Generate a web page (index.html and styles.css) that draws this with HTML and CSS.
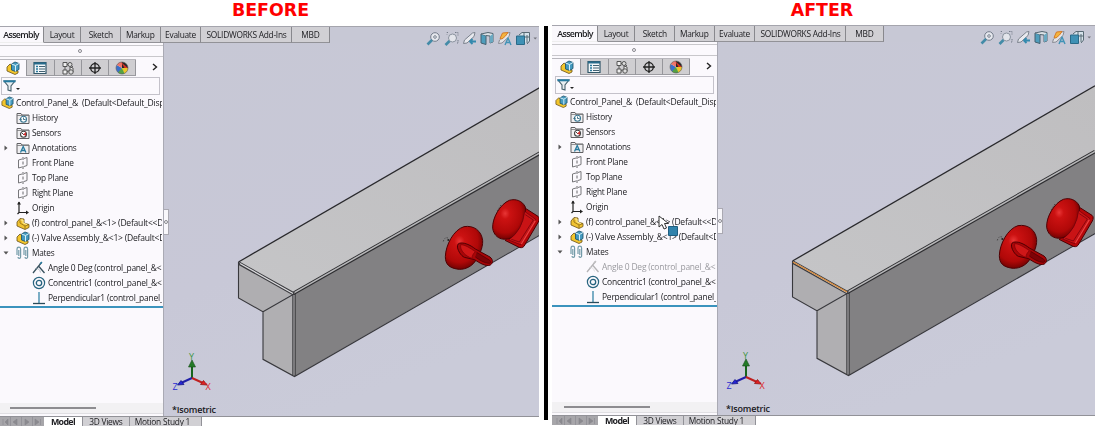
FILE: index.html
```html
<!DOCTYPE html>
<html lang="en">
<head>
<meta charset="utf-8">
<title>Assembly mates: before and after</title>
<link rel="stylesheet" href="styles.css">
</head>
<body>
<svg class="defs" aria-hidden="true">
  <defs>
    <radialGradient id="red" cx=".38" cy=".35" r=".7"><stop offset="0" stop-color="#e83636"/><stop offset=".2" stop-color="#cc1212"/><stop offset=".7" stop-color="#b00808"/><stop offset="1" stop-color="#600000"/></radialGradient>
    <linearGradient id="top" x1="0" y1="1" x2="1" y2="0"><stop offset="0" stop-color="#c5c5c7"/><stop offset="1" stop-color="#bfbec0"/></linearGradient>
    <linearGradient id="bg" x1="0" y1="0" x2=".4" y2="1"><stop offset="0" stop-color="#c7c8d5"/><stop offset=".6" stop-color="#c8c8d7"/><stop offset="1" stop-color="#cacbd9"/></linearGradient>
  </defs>
  <symbol id="asm" viewBox="0 0 14 14"><path d="M1 6l3-3 3 2v4l5 1v2l-3 1.500L1 10z" fill="#f3c52b" stroke="#66501a" stroke-width=".8"/><path d="M5.500 3L9 1l4 1.500v6L9.500 10.500 5.500 9z" fill="#459abf" stroke="#174b65" stroke-width=".8"/><path d="M5.500 3l4 1.500L13 2.500M9.500 4.500v6" fill="none" stroke="#d8f1fa" stroke-width="1"/></symbol>
  <symbol id="part" viewBox="0 0 14 14"><path d="M1 6l3-3.500L8 3v4l5 1.500v3L9 13.500 1 10z" fill="#f0c231" stroke="#6b5218" stroke-width=".8"/><path d="M4 3v4l5 3v3M9 10l4-1.500" fill="none" stroke="#8c6b18" stroke-width=".8"/><path d="M4.500 4L7 4v3l4 1.500" fill="none" stroke="#fff0a0"/></symbol>
  <symbol id="list" viewBox="0 0 14 14"><path d="M1 1.500h12v11H1z" fill="#f3f8fa" stroke="#315668" stroke-width="1.200"/><path d="M1 2.500h12" stroke="#286c8c" stroke-width="2"/><path d="M3 5.500h2M3 8h2M3 10.500h2" stroke="#287a9e" stroke-width="1.500"/><path d="M6 5.500h6M6 8h6M6 10.500h6" stroke="#426273"/></symbol>
  <symbol id="config" viewBox="0 0 14 14"><g fill="#eee" stroke="#555" stroke-width="1"><path d="M2 1.500h4v4H2zM2 9h4v4H2zM9 6l3 1v4l-3-1z"/><path d="M4 5.500V9M6 3.500h3L12 6M6 11l3-2" fill="none"/></g><circle cx="9" cy="3.500" r="2" fill="#ddd" stroke="#555"/><circle cx="10" cy="11" r="2.200" fill="#ddd" stroke="#555"/></symbol>
  <symbol id="target" viewBox="0 0 14 14"><circle cx="7" cy="7" r="4.300" fill="none" stroke="#222" stroke-width="1.300"/><path d="M7 1v12M1 7h12" stroke="#222" stroke-width="1.300"/></symbol>
  <symbol id="ball" viewBox="0 0 14 14"><circle cx="7" cy="7" r="6" fill="#eee"/><path d="M7 7L1.800 4A6 6 0 0 0 4 12z" fill="#3a70c9"/><path d="M7 7L1.800 4A6 6 0 0 1 7 1z" fill="#ef7569"/><path d="M7 7V1a6 6 0 0 1 6 6z" fill="#282828"/><path d="M6 1l7 6-3 1z" fill="#d33125"/><path d="M7 7h6a6 6 0 0 1-4 5.500z" fill="#edc629"/><path d="M7 7l2.500 5.500A6 6 0 0 1 3 11.500z" fill="#55a243"/><circle cx="7" cy="7" r="6" fill="none" stroke="#555" stroke-width=".6"/></symbol>
  <symbol id="funnel" viewBox="0 0 18 14"><path d="M1 2h11L8 7v5l-3-1V7z" fill="#e8eef1" stroke="#47616d" stroke-width="1.100"/><path d="M.500 2.300h12" stroke="#247aa0" stroke-width="2"/><path d="M13 9h4l-2 2z" fill="#222"/></symbol>
  <symbol id="folder" viewBox="0 0 14 14"><path d="M1 12.500v-10h4l1 1.500h7v8.500z" fill="#f0eff1" stroke="#606063"/><path d="M1 4.500h12" stroke="#77777a" stroke-width=".8"/></symbol>
  <symbol id="history" viewBox="0 0 14 14"><use href="#folder"/><circle cx="7.500" cy="8.300" r="3" fill="#fff" stroke="#3c7893" stroke-width="1.100"/><path d="M7.500 6.500v2h2M3.500 9l1-1.500 1 1.500" fill="none" stroke="#356b82" stroke-width=".9"/></symbol>
  <symbol id="sensor" viewBox="0 0 14 14"><use href="#folder"/><circle cx="7.500" cy="8.300" r="3" fill="#fff" stroke="#444" stroke-width="1.100"/><path d="M5.500 6.500L8 9" stroke="#444"/><path d="M7 8.500l3-2.500v4z" fill="#cf3030"/></symbol>
  <symbol id="annot" viewBox="0 0 14 14"><use href="#folder"/><path d="M4.500 11.500l2.700-6 2.700 6M5.500 9.500h3.500" fill="none" stroke="#26799d" stroke-width="1.300"/></symbol>
  <symbol id="plane" viewBox="0 0 14 14"><path d="M6 3L2.500 4v8L6 11M8 2.500l3-1v8L8 10.500" fill="none" stroke="#77777a" stroke-width="1"/><path d="M7 1v12" stroke="#68686c" stroke-dasharray="3 1.500"/></symbol>
  <symbol id="origin" viewBox="0 0 14 14"><path d="M3 1v10.500h9M1.500 13L3 11.500" fill="none" stroke="#222" stroke-width="1.200"/><path d="M1 3.500L3 .500l2 3zM10 9.500l3 2-3 2z" fill="#222"/></symbol>
  <symbol id="mates" viewBox="0 0 14 14"><g fill="none" stroke="#739aa8" stroke-width="1.200"><path d="M2.800 4v6M1 9V3a1.800 1.800 0 0 1 3.600 0v8a1.300 1.300 0 0 1-2.600 0M9.800 4v6M8 9V3a1.800 1.800 0 0 1 3.600 0v8a1.300 1.300 0 0 1-2.600 0"/></g></symbol>
  <symbol id="angle" viewBox="0 0 14 14"><path d="M1 12L9.500 1.500M6.500 5L12.500 12" fill="none" stroke="#38515e" stroke-width="1.300"/><path d="M3 7.500c3-.5 5 1 5.500 4" fill="none" stroke="#80949e" stroke-width=".6"/><path d="M8 3l2-2" stroke="#267b9f" stroke-width="1.500"/></symbol>
  <symbol id="conc" viewBox="0 0 14 14"><circle cx="7" cy="7" r="5.600" fill="none" stroke="#27647f" stroke-width="1.200"/><circle cx="7" cy="7" r="2.700" fill="none" stroke="#27647f" stroke-width="1.300"/></symbol>
  <symbol id="perp" viewBox="0 0 14 14"><path d="M7 1v11.500" stroke="#3585a8" stroke-width="1.300"/><path d="M1 12.500h12" stroke="#294b5b" stroke-width="1.300"/></symbol>
  <symbol id="arrow" viewBox="0 0 6 8"><path d="M1.500 1.500L4.500 4l-3 2.500z" fill="#555"/></symbol>
  <symbol id="open" viewBox="0 0 6 8"><path d="M.500 2.500h5L3 5.500z" fill="#555"/></symbol>

  <symbol id="views" viewBox="0 0 112 16">
    <g fill="none" stroke-linejoin="round">
      <circle cx="9" cy="6" r="4.300" fill="#e6e8ee" stroke="#747d8b"/><path d="M7 6h4M9 4v4" stroke="#5f6a78" stroke-dasharray="1.500 1"/><path d="M1.500 13.500L6 9" stroke="#438ba7" stroke-width="2.600"/>
      <circle cx="26.500" cy="7" r="4" fill="#e3e5eb" stroke="#8a929e"/><path d="M22 1.500h-1v2M29 1.500h3v3M32 9v3h-2" stroke="#737b88" stroke-dasharray="1.500 1"/><path d="M19.500 14l4-4" stroke="#438ba7" stroke-width="2.600"/>
      <path d="M37.500 12.500l1-3.500 8-7 2.500-.5-1 4-7 6.500z" fill="#e8e9ee" stroke="#7b828d"/><path d="M50 10.500h-6m2.500-2.500L44 10.500l2.500 2.500" stroke="#348aae" stroke-width="1.800"/>
      <path d="M55 3l5 1.500v9L55 12z" fill="#4f9dbc" stroke="#456170"/><path d="M55 3l7-1.500 5 1v8.500l-3 1V5l-4-.5" fill="#dbe1e6" stroke="#536570"/><path d="M64 5v7l3-1V3z" fill="#6aa9c2"/>
      <path d="M72.500 12.500l1-3.500 8-7 2.500-.5-1 4-7 6.500z" fill="#e3e4e7" stroke="#898c94"/><path d="M74 7.500L76.500 2 82 1.500 79.500 5 76 8z" fill="#f4b43d" stroke="#d67a28"/><path d="M79 14l3-7 3 7m-5-2.500h4" stroke="#4293b6" stroke-width="1.400"/>
      <path d="M93 4l3-2.500h7.500V10L101 13" fill="#d6e3eb" stroke="#596a74"/><path d="M98 2v11M93 6h10M101 4v8" stroke="#596a74"/><path d="M90.500 5h8v8.500h-8z" fill="#3f91b5" stroke="#2a6a88"/>
    </g>
    <path d="M107.500 6.500h3.500l-1.800 2z" fill="#73747d"/>
  </symbol>

  <symbol id="scene" viewBox="164 43 377 373">
    <path d="M164 43h377v373H164z" fill="url(#bg)"/>
    <path d="M239 262L541 87v66L294 293z" fill="url(#top)"/>
    <path d="M294 293L541 152v82L294 376.500z" fill="#828183"/>
    <path d="M238.500 262.500v35.500L263 311.800l30.500-18.500z" fill="#afaeb1"/>
    <path d="M263 311.800v47.500l31 17V293.500z" fill="#b0afb2"/>
    <path d="M238.500 262L541 86.800" fill="none" stroke="#29292c" stroke-width="1.300"/>
    <path d="M238.500 262v36L263 311.800v47.500l31.500 17.200L541 234.500M263 311.800l30.500-17.500" fill="none" stroke="#38383c" stroke-width="1.100"/>
    <path d="M294 293L541 152.500" stroke="#2d2d30" stroke-width="3.600"/>
    <path d="M294 292.800L541 152.300" stroke="#b8b8ba" stroke-width="1.500"/>
    <path d="M239 263.200L294 294" stroke="#3b3b3f" stroke-width="3.400"/>
    <path d="M240 263.500L293 293.500" stroke="#dadadd" stroke-width="1.300"/>
    <path d="M294 294v82" stroke="#38383b" stroke-width="3.400"/><path d="M294 295v80.500" stroke="#929194" stroke-width="1.500"/>
    <g transform="translate(420 180) scale(.33333)" stroke="#4c0003" stroke-width="3">
      <path d="M70 184q4-15 16-9M232 92l10-16" fill="none" stroke="#333" stroke-dasharray="3 5"/><circle cx="85" cy="180" r="3" fill="#222" stroke="none"/>
      <path d="M76 230C77 195 101 149 132 140c29-5 53 12 56 42 1 22-11 47-24 64-12 16-34 25-54 21-21-4-34-13-34-37z" fill="url(#red)"/>
      <path d="M118 190c12-4 32 4 48 17l44 24c10 8 9 19 1 24-12 6-33-6-47-16l-31-7c-15-7-29-38-15-42z" fill="#a80608"/>
      <path d="M122 194c13 0 28 10 44 21-6 5-10 13-10 20-18-6-37-23-34-41z" fill="#cf1718" stroke="#780006" stroke-width="2"/>
      <path d="M170 217l38 23c6 5 5 11-2 10-14-1-29-11-40-19" fill="#7d0307" stroke-width="2"/>
      <path d="M300 78l18 8 36 23c5 4 4 11 1 17l-43 73c-4 5-11 5-17 2l-40-20" fill="#b50709"/>
      <path d="M218 145c-2-31 23-73 50-84 19-6 40 2 48 20 5 26-13 70-37 89-19 14-55 11-61-25z" fill="url(#red)"/>
      <path d="M314 94l33 24-45 76-36-14q42-30 48-86z" fill="#c91315" stroke="#66000a" stroke-width="2"/>
      <path d="M316 104l24 16-42 66-24-8" fill="none" stroke="#66000a" stroke-width="2"/>
      <path d="M346 122l-42 70" stroke="#ed4040" stroke-width="4" fill="none"/>
    </g>
    <g fill="none" stroke-width="2"><path d="M192 378v-13" stroke="#17651c"/><path d="M192 378l-11 5" stroke="#2020a8"/><path d="M192 378l11 5" stroke="#c02020"/></g>
    <path d="M192 360l3.500 7h-7z" fill="#247b28" stroke="#164b18" stroke-width=".6"/><path d="M177.500 385l3.500-4.500 3 4z" fill="#2525d3" stroke="#171785" stroke-width=".8"/><path d="M207 385l-3.500-4.500-3 4z" fill="#e32020" stroke="#8e1515" stroke-width=".8"/>
  </symbol>
</svg>

<main class="comparison">
  <section class="side before">
    <h2 class="heading">BEFORE</h2>
    <div class="window">
      <nav class="ribbon"><b><em>Assembly</em></b><span class="w37"><em>Layout</em></span><span class="w40"><em>Sketch</em></span><span class="w40"><em>Markup</em></span><span class="w40"><em>Evaluate</em></span><span class="w91"><em>SOLIDWORKS Add-Ins</em></span><span class="w38"><em>MBD</em></span></nav>
      <svg class="views"><use href="#views"/></svg>
      <div class="work">
        <aside class="panel">
          <div class="grip"><i></i></div>
          <div class="ptabs"><span class="on"><svg><use href="#asm"/></svg></span><span><svg><use href="#list"/></svg></span><span><svg><use href="#config"/></svg></span><span><svg><use href="#target"/></svg></span><span><svg><use href="#ball"/></svg></span><svg class="more" viewBox="0 0 6 8"><path d="M1 1l3.500 3L1 7"/></svg></div>
          <div class="filter"><svg><use href="#funnel"/></svg></div>
          <div class="tree">
            <div class="row root"><svg class="ic"><use href="#asm"/></svg><span>Control_Panel_&amp;&nbsp; (Default&lt;Default_Displ</span></div>
            <div class="row"><i class="tw"></i><svg class="ic"><use href="#history"/></svg><span>History</span></div>
            <div class="row"><i class="tw"></i><svg class="ic"><use href="#sensor"/></svg><span>Sensors</span></div>
            <div class="row"><svg class="tw"><use href="#arrow"/></svg><svg class="ic"><use href="#annot"/></svg><span>Annotations</span></div>
            <div class="row"><i class="tw"></i><svg class="ic"><use href="#plane"/></svg><span>Front Plane</span></div>
            <div class="row"><i class="tw"></i><svg class="ic"><use href="#plane"/></svg><span>Top Plane</span></div>
            <div class="row"><i class="tw"></i><svg class="ic"><use href="#plane"/></svg><span>Right Plane</span></div>
            <div class="row"><i class="tw"></i><svg class="ic"><use href="#origin"/></svg><span>Origin</span></div>
            <div class="row comp"><svg class="tw"><use href="#arrow"/></svg><svg class="ic"><use href="#part"/></svg><span>(f) control_panel_&amp;&lt;1&gt; (Default&lt;&lt;D</span></div>
            <div class="row comp"><svg class="tw"><use href="#arrow"/></svg><svg class="ic"><use href="#asm"/></svg><span>(-) Valve Assembly_&amp;&lt;1&gt; (Default&lt;D</span></div>
            <div class="row"><svg class="tw"><use href="#open"/></svg><svg class="ic"><use href="#mates"/></svg><span>Mates</span></div>
            <div class="row child"><svg class="ic"><use href="#angle"/></svg><span>Angle 0 Deg (control_panel_&amp;&lt;</span></div>
            <div class="row child"><svg class="ic"><use href="#conc"/></svg><span>Concentric1 (control_panel_&amp;&lt;</span></div>
            <div class="row child"><svg class="ic"><use href="#perp"/></svg><span>Perpendicular1 (control_panel_&amp;</span></div>
          </div>
          <div class="scroll"><i></i></div>
        </aside>
        <div class="viewport">
          <svg class="model" viewBox="164 43 377 373"><use href="#scene" x="164" y="43" width="377" height="373"/><g class="axis"><text x="189" y="359.500" fill="#409544">Y</text><text x="172.500" y="389.500" fill="#2b2bd0">Z</text><text x="205.500" y="390" fill="#df2828">X</text></g><text x="172" y="413" class="orientation" textLength="44">*Isometric</text></svg>
          <div class="handle"><i></i></div>
        </div>
      </div>
      <footer class="sheets"><span class="nav"><svg viewBox="0 0 44 10"><path d="M3 2v6M8 2L5 5l3 3zM17 2l-4 3 4 3zM25 2l4 3-4 3zM35 2l4 3-4 3zM40.500 2v6M10.500 0v10M21.500 0v10M32.500 0v10"/></svg></span><b><em>Model</em></b><span class="w47"><em>3D Views</em></span><span class="w73"><em>Motion Study 1</em></span></footer>
    </div>
  </section>

  <div class="divider"></div>

  <section class="side after">
    <h2 class="heading">AFTER</h2>
    <div class="window">
      <nav class="ribbon"><b><em>Assembly</em></b><span class="w37"><em>Layout</em></span><span class="w40"><em>Sketch</em></span><span class="w40"><em>Markup</em></span><span class="w40"><em>Evaluate</em></span><span class="w91"><em>SOLIDWORKS Add-Ins</em></span><span class="w38"><em>MBD</em></span></nav>
      <svg class="views"><use href="#views"/></svg>
      <div class="work">
        <aside class="panel">
          <div class="grip"><i></i></div>
          <div class="ptabs"><span class="on"><svg><use href="#asm"/></svg></span><span><svg><use href="#list"/></svg></span><span><svg><use href="#config"/></svg></span><span><svg><use href="#target"/></svg></span><span><svg><use href="#ball"/></svg></span><svg class="more" viewBox="0 0 6 8"><path d="M1 1l3.500 3L1 7"/></svg></div>
          <div class="filter"><svg><use href="#funnel"/></svg></div>
          <div class="tree">
            <div class="row root"><svg class="ic"><use href="#asm"/></svg><span>Control_Panel_&amp;&nbsp; (Default&lt;Default_Displ</span></div>
            <div class="row"><i class="tw"></i><svg class="ic"><use href="#history"/></svg><span>History</span></div>
            <div class="row"><i class="tw"></i><svg class="ic"><use href="#sensor"/></svg><span>Sensors</span></div>
            <div class="row"><svg class="tw"><use href="#arrow"/></svg><svg class="ic"><use href="#annot"/></svg><span>Annotations</span></div>
            <div class="row"><i class="tw"></i><svg class="ic"><use href="#plane"/></svg><span>Front Plane</span></div>
            <div class="row"><i class="tw"></i><svg class="ic"><use href="#plane"/></svg><span>Top Plane</span></div>
            <div class="row"><i class="tw"></i><svg class="ic"><use href="#plane"/></svg><span>Right Plane</span></div>
            <div class="row"><i class="tw"></i><svg class="ic"><use href="#origin"/></svg><span>Origin</span></div>
            <div class="row comp"><svg class="tw"><use href="#arrow"/></svg><svg class="ic"><use href="#part"/></svg><span>(f) control_panel_&amp;&lt;1&gt; (Default&lt;&lt;D</span></div>
            <div class="row comp"><svg class="tw"><use href="#arrow"/></svg><svg class="ic"><use href="#asm"/></svg><span>(-) Valve Assembly_&amp;&lt;1&gt; (Default&lt;D</span></div>
            <div class="row"><svg class="tw"><use href="#open"/></svg><svg class="ic"><use href="#mates"/></svg><span>Mates</span></div>
            <div class="row child suppressed"><svg class="ic"><use href="#angle"/></svg><span>Angle 0 Deg (control_panel_&amp;&lt;</span></div>
            <div class="row child"><svg class="ic"><use href="#conc"/></svg><span>Concentric1 (control_panel_&amp;&lt;</span></div>
            <div class="row child"><svg class="ic"><use href="#perp"/></svg><span>Perpendicular1 (control_panel_&amp;</span></div>
          </div>
          <div class="scroll"><i></i></div>
        </aside>
        <div class="viewport">
          <svg class="model" viewBox="164 43 377 373"><use href="#scene" x="164" y="43" width="377" height="373"/><path d="M239 263L293 293" stroke="#d88938" stroke-width="1.400"/><g class="axis"><text x="189" y="359.500" fill="#409544">Y</text><text x="172.500" y="389.500" fill="#2b2bd0">Z</text><text x="205.500" y="390" fill="#df2828">X</text></g><text x="172" y="413" class="orientation" textLength="44">*Isometric</text></svg>
          <div class="handle"><i></i></div>
        </div>
      </div>
      <footer class="sheets"><span class="nav"><svg viewBox="0 0 44 10"><path d="M3 2v6M8 2L5 5l3 3zM17 2l-4 3 4 3zM25 2l4 3-4 3zM35 2l4 3-4 3zM40.500 2v6M10.500 0v10M21.500 0v10M32.500 0v10"/></svg></span><b><em>Model</em></b><span class="w47"><em>3D Views</em></span><span class="w73"><em>Motion Study 1</em></span></footer>
      <svg class="cursor" viewBox="0 0 21 22"><path d="M1 1v11l3-2.500 2 4.500 2.500-1-2-4.500h4z" fill="#fff" stroke="#333"/><path d="M10.500 11.500h9v9h-9z" fill="#3082ab" stroke="#205e80"/></svg>
    </div>
  </section>
</main>
</body>
</html>
```

FILE: styles.css
```css
* { box-sizing: border-box; }
body { margin: 0; background: #fff; color: #202024; font: 9.5px/12px "Open Sans", "Noto Sans", sans-serif; overflow: hidden; }
.defs { position: absolute; width: 0; height: 0; }
.comparison { display: grid; grid-template-columns: 539px 13px 543px; width: 1095px; height: 428px; }
.side { --inset: 0px; display: grid; grid-template-rows: 26px 400px; min-width: 0; overflow: hidden; }
.after { --inset: 2px; grid-template-rows: 25px 400px; }
.divider { margin: 26px 4px 8px 5px; background: #000; }
.heading { margin: 0; height: 26px; text-align: center; color: #f00; font: bold 17.4px/20px "DejaVu Sans", sans-serif; padding-left: 2px; }
.after .heading { height: 25px; padding: 0 3px 0 0; }
.window { position: relative; display: grid; grid-template-rows: 16px 373px 10px; background: #c7c8d5; border-top: 1px solid #a5a5ad; height: 400px; overflow: hidden; }
.ribbon { display: flex; width: max-content; height: 16px; white-space: nowrap; line-height: 15px; letter-spacing: -.3px; }
.ribbon b, .ribbon span { display: flex; justify-content: center; border-right: 1px solid #88888d; border-bottom: 1px solid #929297; background: #d1d0d4; }
em { flex: none; display: block; font-style: normal; transform: scaleX(.88); }
b em { transform: scaleX(.93); }
.ribbon b { width: calc(44px + var(--inset)); padding-left: var(--inset); background: #faf8fc; font-weight: 600; letter-spacing: -.7px; border-bottom-color: #eee; }
.w37 { width: 37px; } .w38 { width: 38px; } .w40 { width: 40px; } .w91 { width: 91px; } .w47 { width: 47px; } .w73 { width: 73px; }
.views { position: absolute; z-index: 1; left: calc(426px + var(--inset)); top: 4px; width: 112px; height: 16px; }
.work { display: grid; grid-template-columns: calc(164px + var(--inset)) 1fr; min-width: 0; }
.panel { display: flex; flex-direction: column; background: #fbf9fd; border-right: 1px solid #aaaab4; height: 373px; overflow: hidden; }
.grip { height: 12px; margin: 2px 0; border-top: 1px solid #c8c7cb; border-bottom: 1px solid #c8c7cb; display: grid; place-items: center; padding: 0 3px 0 var(--inset); }
.grip i, .handle i { width: 4px; height: 4px; border: 1px solid #88888e; border-radius: 50%; }
.ptabs { display: flex; height: 17px; padding-left: var(--inset); border-top: 1px solid #b8b7bd; width: calc(136px + var(--inset)); flex: none; }
.ptabs span { width: 27.25px; flex: none; display: grid; place-items: center; background: #cfced1; border-right: 1px solid #96969b; border-bottom: 1px solid #9b9ba0; }
.ptabs span.on { background: #fbf9fd; border-bottom: 0; }
.ptabs span svg { width: 14px; height: 14px; }
.ptabs .more { flex: none; width: 6px; height: 8px; margin: 3px 0 0 16px; fill: none; stroke: #222; stroke-width: 1.4; }
.filter { height: 18px; flex: none; margin: 1px 3px 0 calc(1px + var(--inset)); border: 1px solid #c4c2ca; display: flex; align-items: center; }
.filter svg { width: 18px; height: 14px; margin-left: 1px; }
.tree { width: 100%; padding: 0 0 1px var(--inset); border-bottom: 2px solid #3b93bd; overflow: hidden; flex: none; }
.row { display: flex; align-items: center; height: 15px; margin-right: 1px; padding-left: 3px; white-space: nowrap; letter-spacing: -.25px; overflow: hidden; }
.row span { flex: none; line-height: 15px; transform: scaleX(.87); transform-origin: 0 50%; }
.tw { width: 6px; height: 8px; flex: none; margin-right: 7px; }
.ic { width: 14px; height: 14px; flex: none; margin-right: 2px; }
.root { padding-left: 1px; }
.root .ic { width: 13px; height: 13px; }
.root span, .comp span { transform: scaleX(.9); }
.child { padding-left: 32px; }
.child span { transform: scaleX(.89); }
.suppressed { color: #9a9a9f; }
.suppressed .ic { opacity: .4; filter: grayscale(1); }
.scroll { height: 11px; margin-top: auto; margin-bottom: 2px; background: #f2f1f3; border-bottom: 1px solid #e0dfe3; padding: 4px 0 0 calc(10px + var(--inset)); }
.scroll i { display: block; width: 86px; height: 2px; background: #8d8c90; }
.viewport { position: relative; overflow: hidden; min-width: 0; }
.model { display: block; width: 377px; height: 373px; }
.axis { font: 9px "Open Sans", sans-serif; }
.orientation { font: 600 9px "Open Sans", sans-serif; fill: #18181c; }
.handle { position: absolute; left: -1px; top: 166px; width: 6px; height: 26px; background: #f8f7fb; border: 1px solid #aaa9b2; border-left: 0; display: grid; place-items: center; }
.sheets { display: flex; border-top: 1px solid #929298; background: #fff; white-space: nowrap; line-height: 10px; height: 10px; overflow: hidden; letter-spacing: -.3px; }
.nav { width: calc(44px + var(--inset)); padding-left: var(--inset); background: #a7a6aa; }
.nav svg { display: block; width: 44px; height: 10px; fill: #8b8a8f; stroke: #88878d; stroke-width: .6; }
.sheets b { display: flex; justify-content: center; width: 38px; background: #fff; letter-spacing: -.7px; }
.sheets .w47, .sheets .w73 { display: flex; justify-content: center; background: #d1d0d4; border-left: 1px solid #929298; }
.sheets .w73 { border-right: 1px solid #929298; padding-right: 7px; }
.cursor { position: absolute; left: 106px; top: 189px; width: 21px; height: 22px; }
```
